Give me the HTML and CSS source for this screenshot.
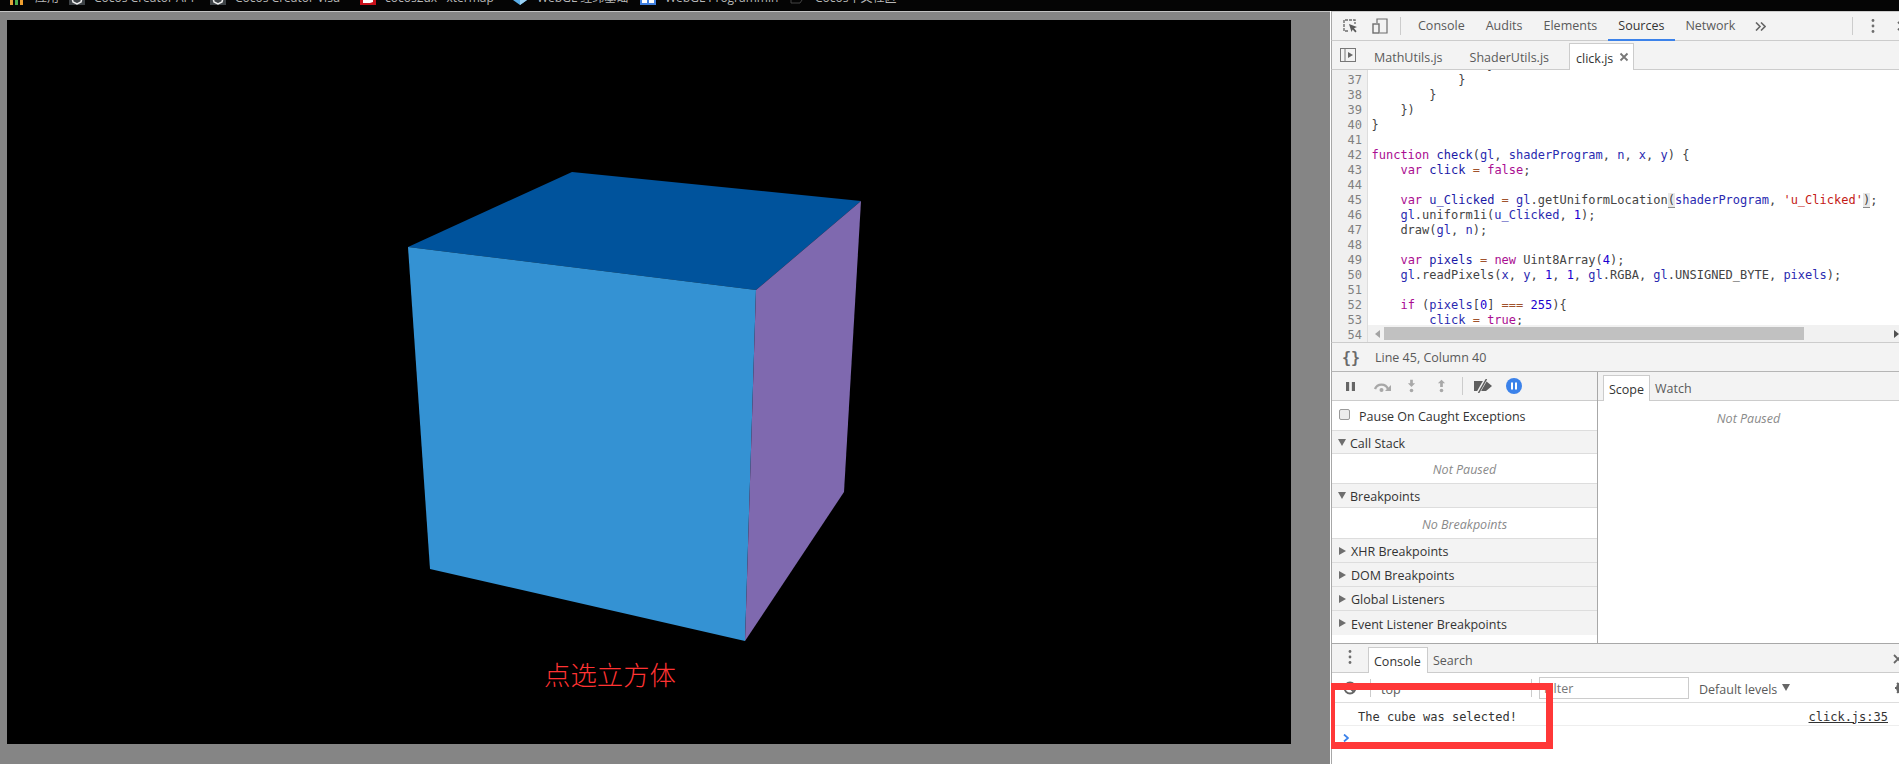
FILE: index.html
```html
<!DOCTYPE html>
<html lang="zh">
<head>
<meta charset="utf-8">
<title>点选立方体</title>
<link rel="stylesheet" href="styles.css">
</head>
<body>
<header class="browser-bar">
  <div class="bookmarks">
    <div class="bm"><svg class="bm-icon" viewBox="0 0 16 16"><rect x="0" y="11" width="3" height="5" fill="#e8a33b"/><rect x="5" y="11" width="3" height="5" fill="#4caf50"/><rect x="10" y="11" width="3" height="5" fill="#f0a030"/></svg><span>应用</span></div>
    <div class="bm"><svg class="bm-icon" viewBox="0 0 16 16"><rect width="16" height="16" fill="#3d4246"/><path d="M3 9l1 4 4 2 4-2 1-4" fill="none" stroke="#eee" stroke-width="1.5"/></svg><span>Cocos Creator API</span></div>
    <div class="bm"><svg class="bm-icon" viewBox="0 0 16 16"><rect width="16" height="16" fill="#3d4246"/><path d="M3 9l1 4 4 2 4-2 1-4" fill="none" stroke="#eee" stroke-width="1.5"/></svg><span>Cocos Creator Visu</span></div>
    <div class="bm"><svg class="bm-icon" viewBox="0 0 16 16"><rect width="16" height="16" fill="#c8101a"/><path d="M3 10h10v3l-3 1H3z" fill="#fff"/></svg><span>cocos2dx · xtermap</span></div>
    <div class="bm"><svg class="bm-icon" viewBox="0 0 16 16"><path d="M1 11h14l-7 5z" fill="#5aaee8"/><path d="M8 11h7l-7 5z" fill="#9ad2f5"/></svg><span>WebGL 经纬基础</span></div>
    <div class="bm"><svg class="bm-icon" viewBox="0 0 16 16"><rect width="16" height="16" fill="#3f7fe0"/><rect x="2" y="9" width="5" height="5" fill="#fff"/><rect x="9" y="9" width="5" height="5" fill="#fff"/></svg><span>WebGL Programmin</span></div>
    <div class="bm"><svg class="bm-icon" viewBox="0 0 16 16"><path d="M1 9v5h9l2-3V9" fill="none" stroke="#444" stroke-width="1"/></svg><span>Cocos中文社区</span></div>
  </div>
</header>

<main class="workspace">
  <section class="viewport">
    <div class="canvas">
      <svg class="cube" viewBox="0 0 1284 724" aria-label="cube">
        <polygon points="565,152 854,181 749,270 401,227" fill="#00539c"/>
        <polygon points="401,227 749,270 738,621 423,549" fill="#3492d3"/>
        <polygon points="749,270 854,181 837,472 738,621" fill="#7f69af"/>
      </svg>
      <p class="caption">点选立方体</p>
    </div>
  </section>

  <aside class="devtools">
    <nav class="main-tabs">
      <svg class="ic ic-inspect" viewBox="0 0 16 16"><path d="M6 13H2V2h11v4" fill="none" stroke="#6e6e6e" stroke-width="1.4" stroke-dasharray="3 1"/><path d="M7 6l8 3-3 1.3 2.6 3-1.3 1.2-2.6-3L9.500 14z" fill="#5a5a5a"/></svg>
      <svg class="ic ic-device" viewBox="0 0 16 16"><path d="M5 5V1h10v14H8" fill="none" stroke="#6e6e6e" stroke-width="1.2"/><rect x="1" y="6" width="6" height="9" fill="none" stroke="#6e6e6e" stroke-width="1.4"/></svg>
      <i class="sep sep-a"></i>
      <span class="tab">Console</span>
      <span class="tab">Audits</span>
      <span class="tab">Elements</span>
      <span class="tab active">Sources</span>
      <span class="tab">Network</span>
      <svg class="more" viewBox="0 0 11 9"><path d="M1 .5L5 4.500 1 8.500M6 .5l4 4-4 4" fill="none" stroke="#666" stroke-width="1.600"/></svg>
      <i class="sep sep-b"></i>
      <svg class="kebab" viewBox="0 0 4 16"><circle cx="2" cy="2.500" r="1.400"/><circle cx="2" cy="8" r="1.400"/><circle cx="2" cy="13.500" r="1.400"/></svg>
      <svg class="close-x" viewBox="0 0 10 10"><path d="M1 1l8 8M9 1L1 9" stroke="#666" stroke-width="1.800"/></svg>
    </nav>

    <div class="file-tabs">
      <svg class="ic ic-toggle" viewBox="0 0 16 14"><rect x=".5" y=".5" width="15" height="13" fill="none" stroke="#777"/><path d="M5 1v12" stroke="#777"/><path d="M8 4l5 3-5 3z" fill="#666"/></svg>
      <span class="file">MathUtils.js</span>
      <span class="file">ShaderUtils.js</span>
      <span class="file open">click.js<svg class="file-x" viewBox="0 0 10 10"><path d="M1.500 1.500l7 7M8.500 1.500l-7 7" stroke="#777" stroke-width="1.800"/></svg></span>
    </div>

    <div class="code">
      <div class="lines">
        <div class="ln"><b>36</b><code>                }</code></div>
        <div class="ln"><b>37</b><code>            }</code></div>
        <div class="ln"><b>38</b><code>        }</code></div>
        <div class="ln"><b>39</b><code>    })</code></div>
        <div class="ln"><b>40</b><code>}</code></div>
        <div class="ln"><b>41</b><code></code></div>
        <div class="ln"><b>42</b><code><em class="k">function</em> <em class="d">check</em>(<em class="v">gl</em>, <em class="v">shaderProgram</em>, <em class="v">n</em>, <em class="v">x</em>, <em class="v">y</em>) {</code></div>
        <div class="ln"><b>43</b><code>    <em class="k">var</em> <em class="d">click</em> <em class="o">=</em> <em class="k">false</em>;</code></div>
        <div class="ln"><b>44</b><code></code></div>
        <div class="ln"><b>45</b><code>    <em class="k">var</em> <em class="d">u_Clicked</em> <em class="o">=</em> <em class="v">gl</em>.getUniformLocation<em class="match">(</em><em class="v">shaderProgram</em>, <em class="s">'u_Clicked'</em><em class="match">)</em>;</code></div>
        <div class="ln"><b>46</b><code>    <em class="v">gl</em>.uniform1i(<em class="v">u_Clicked</em>, <em class="m">1</em>);</code></div>
        <div class="ln"><b>47</b><code>    draw(<em class="v">gl</em>, <em class="v">n</em>);</code></div>
        <div class="ln"><b>48</b><code></code></div>
        <div class="ln"><b>49</b><code>    <em class="k">var</em> <em class="d">pixels</em> <em class="o">=</em> <em class="k">new</em> Uint8Array(<em class="m">4</em>);</code></div>
        <div class="ln"><b>50</b><code>    <em class="v">gl</em>.readPixels(<em class="v">x</em>, <em class="v">y</em>, <em class="m">1</em>, <em class="m">1</em>, <em class="v">gl</em>.RGBA, <em class="v">gl</em>.UNSIGNED_BYTE, <em class="v">pixels</em>);</code></div>
        <div class="ln"><b>51</b><code></code></div>
        <div class="ln"><b>52</b><code>    <em class="k">if</em> (<em class="v">pixels</em>[<em class="m">0</em>] <em class="o">===</em> <em class="m">255</em>){</code></div>
        <div class="ln"><b>53</b><code>        <em class="v">click</em> <em class="o">=</em> <em class="k">true</em>;</code></div>
        <div class="ln"><b>54</b><code></code></div>
      </div>
      <div class="hscroll">
        <i class="arrow-l"></i>
        <i class="thumb"></i>
        <i class="arrow-r"></i>
      </div>
    </div>

    <div class="status"><span class="braces">{}</span><span>Line 45, Column 40</span></div>

    <div class="debugger">
      <div class="dbg-left">
        <div class="dbg-tools">
          <svg class="t t-pause" viewBox="0 0 12 10"><path d="M1 0h3.500v10H1zM7.500 0H11v10H7.500z" fill="#666"/></svg>
          <svg class="t t-over" viewBox="0 0 18 11"><path d="M2 8a7 7 0 0 1 13 0" fill="none" stroke="#a8a8a8" stroke-width="2.400"/><path d="M18 4v6h-6z" fill="#a8a8a8"/><circle cx="8.500" cy="9" r="2" fill="#a8a8a8"/></svg>
          <svg class="t t-into" viewBox="0 0 10 14"><path d="M3.500 0h3v4H9L5 8 1 4h2.500z" fill="#a8a8a8"/><circle cx="5" cy="12" r="2" fill="#a8a8a8"/></svg>
          <svg class="t t-out" viewBox="0 0 10 14"><path d="M3.500 8h3V4H9L5 0 1 4h2.500z" fill="#a8a8a8"/><circle cx="5" cy="12" r="2" fill="#a8a8a8"/></svg>
          <i class="t-sep"></i>
          <svg class="t t-deact" viewBox="0 0 20 14"><path d="M1 2h12l6 5-6 5H1z" fill="#5f5f5f"/><path d="M13 0L5 14" stroke="#f3f3f3" stroke-width="3.500"/><path d="M13.500 0L5.500 14" stroke="#5f5f5f" stroke-width="1.500"/></svg>
          <svg class="t t-exc" viewBox="0 0 16 16"><circle cx="8" cy="8" r="8" fill="#3b82ea"/><path d="M5 4.500h2v7H5zM9 4.500h2v7H9z" fill="#fff"/></svg>
        </div>
        <label class="pause-row"><i class="check"></i><span class="row-label">Pause On Caught Exceptions</span></label>
        <div class="sec short"><i class="tri down"></i>Call Stack</div>
        <div class="empty e1">Not Paused</div>
        <div class="sec"><i class="tri down"></i>Breakpoints</div>
        <div class="empty e1 tall">No Breakpoints</div>
        <div class="sec"><i class="tri"></i>XHR Breakpoints</div>
        <div class="sec"><i class="tri"></i>DOM Breakpoints</div>
        <div class="sec"><i class="tri"></i>Global Listeners</div>
        <div class="sec last"><i class="tri"></i>Event Listener Breakpoints</div>
      </div>
      <div class="dbg-right">
        <div class="scope-tabs"><span class="scope on">Scope</span><span class="scope">Watch</span></div>
        <div class="empty e2">Not Paused</div>
      </div>
    </div>

    <div class="drawer">
      <div class="drawer-tabs">
        <svg class="kebab k2" viewBox="0 0 4 16"><circle cx="2" cy="2.500" r="1.400"/><circle cx="2" cy="8" r="1.400"/><circle cx="2" cy="13.500" r="1.400"/></svg>
        <span class="dtab on">Console</span>
        <span class="dtab">Search</span>
        <svg class="close-x x2" viewBox="0 0 10 10"><path d="M1 1l8 8M9 1L1 9" stroke="#666" stroke-width="1.800"/></svg>
      </div>
      <div class="console-bar">
        <svg class="clear" viewBox="0 0 14 14"><circle cx="7" cy="7" r="5.500" fill="none" stroke="#666" stroke-width="2"/><path d="M3 3l8 8" stroke="#666" stroke-width="2"/></svg>
        <i class="c-sep s1"></i>
        <span class="ctx">top</span>
        <i class="c-sep s2"></i>
        <span class="filter">Filter</span>
        <span class="levels">Default levels</span>
        <i class="lv-tri"></i>
        <svg class="gear" viewBox="0 0 14 14"><circle cx="7" cy="7" r="4.500" fill="none" stroke="#666" stroke-width="3"/><path d="M7 0v14M0 7h14M2 2l10 10M12 2L2 12" stroke="#666" stroke-width="2" stroke-dasharray="2 10"/></svg>
      </div>
      <div class="msg"><code>The cube was selected!</code><a class="src-link">click.js:35</a></div>
      <svg class="prompt" viewBox="0 0 6 8"><path d="M1 .5L5 4 1 7.500" fill="none" stroke="#3b82ea" stroke-width="1.800"/></svg>
    </div>

    <div class="highlight"></div>
  </aside>
</main>
</body>
</html>
```

FILE: styles.css
```css
* { box-sizing: border-box; }
html, body { margin: 0; height: 764px; overflow: hidden; }
body { display: flex; flex-direction: column; background: #858585; font: 12.5px "Open Sans", "Noto Sans CJK SC", sans-serif; color: #333; }
i, em { font-style: normal; display: inline-block; }

/* browser chrome remnant */
.browser-bar { height: 11px; flex: none; background: #050505; overflow: hidden; }
.bookmarks { display: grid; grid-template-columns: 59px 141px 150px 152px 128px 150px 1fr; height: 16px; margin: -11px 0 0 10px; color: #b8b8b8; font-size: 12px; }
.bm { display: flex; align-items: center; gap: 9px; overflow: hidden; white-space: nowrap; }
.bm-icon { width: 16px; height: 16px; flex: none; }

.workspace { flex: 1; display: flex; min-height: 0; }

/* page */
.viewport { width: 1330px; flex: none; border-top: 1px solid #c4c4c4; padding: 8px 39px 20px 7px; background: #858585; }
.canvas { position: relative; height: 724px; background: #000; }
.cube { display: block; width: 1284px; height: 724px; }
.caption { position: absolute; left: 537px; top: 636px; margin: 0; font: 26.4px "Noto Sans CJK SC", sans-serif; font-weight: 300; line-height: 36px; color: #ff3333; white-space: nowrap; }

/* devtools */
.devtools { position: relative; flex: 1; min-width: 0; display: flex; flex-direction: column; border-left: 1px solid #fff; background: #fff; overflow: hidden; }
.devtools > * { border-left: 1px solid #a8a8a8; }
.main-tabs { display: flex; align-items: center; flex: none; height: 30px; background: #f3f3f3; border-top: 1px solid #ccc; border-bottom: 1px solid #ccc; color: #5a5a5a; white-space: nowrap; }
.ic { flex: none; }
.ic-inspect { width: 16px; height: 16px; margin-left: 10px; }
.ic-device { width: 16px; height: 18px; margin-left: 14px; }
.sep { width: 1px; height: 18px; background: #ccc; flex: none; }
.sep-a { margin: 0 6.500px 0 12px; }
.tab { height: 28px; line-height: 27px; padding: 0 10.500px; }
.tab.active { color: #333; border-bottom: 2px solid #3b82ea; height: 29px; }
.more { flex: none; width: 11px; height: 9px; margin-left: 9px; }
.sep-b { margin-left: 86px; }
.kebab { width: 4px; height: 16px; fill: #6e6e6e; margin-left: 18px; flex: none; }
.close-x { width: 10px; height: 10px; flex: none; margin-left: 22px; }

.file-tabs { display: flex; align-items: flex-end; flex: none; height: 29px; background: #f3f3f3; border-bottom: 1px solid #ccc; color: #5a5a5a; white-space: nowrap; }
.ic-toggle { width: 16px; height: 14px; margin: 0 18px 7px 8px; }
.file { height: 26px; line-height: 29px; }
.file + .file { margin-left: 27px; }
.file.open { display: flex; align-items: center; margin: 0 0 -1px 20px; height: 27px; width: 65px; padding: 2px 0 0 6px; gap: 6px; line-height: 25px; color: #333; background: #fff; border: 1px solid #ccc; border-bottom: 0; }
.file-x { width: 10px; height: 10px; margin-top: -2px; }

.code { position: relative; flex: none; height: 272px; overflow: hidden; background: #fff; }
.lines { margin-top: -12px; }
.ln { display: flex; height: 15px; font: 12px/15px "DejaVu Sans Mono", monospace; }
.ln b { flex: none; width: 36px; padding-right: 5px; font-weight: 400; text-align: right; color: #808080; background: #f0f0f0; border-right: 1px solid #ddd; }
.ln code { font: inherit; padding-left: 3.500px; white-space: pre; color: #444; }
.k { color: #aa0d91; }
.d { color: #1a1aa6; }
.v { color: #2a2ab0; }
.m { color: #1c00cf; }
.s { color: #c41a16; }
.o { color: #a0522d; }
.match { background: #e8e8e8; box-shadow: inset 0 -1px 0 #888; }

.hscroll { position: absolute; left: 36px; right: 0; bottom: 0; height: 17px; display: flex; align-items: center; background: #f1f1f1; }
.arrow-l { width: 0; height: 0; margin-left: 7px; border: 4px solid transparent; border-right: 5px solid #a3a3a3; border-left: 0; }
.thumb { width: 420px; height: 13px; margin-left: 4px; background: #c1c1c1; }
.arrow-r { width: 0; height: 0; margin-left: auto; border: 4px solid transparent; border-left: 5px solid #505050; border-right: 0; }

.status { display: flex; align-items: center; flex: none; height: 30px; padding-top: 1px; background: #f3f3f3; border-top: 1px solid #ccc; border-bottom: 1px solid #b5b5b5; color: #5a5a5a; }
.braces { width: 43px; padding-left: 10px; font: 700 15px "DejaVu Sans Mono", monospace; color: #6a6a6a; }

.debugger { display: flex; flex: none; height: 272px; border-bottom: 1px solid #a8a8a8; }
.dbg-left { width: 266px; flex: none; background: #fff; border-right: 1px solid #a8a8a8; }
.dbg-tools { display: flex; align-items: center; height: 29px; background: #f3f3f3; border-bottom: 1px solid #ccc; }
.t { flex: none; }
.t-pause { width: 11px; height: 9px; margin-left: 13px; }
.t-over { width: 18px; height: 11px; margin-left: 17px; }
.t-into { width: 9px; height: 14px; margin-left: 16px; }
.t-out { width: 9px; height: 14px; margin-left: 21px; }
.t-sep { width: 1px; height: 18px; background: #ccc; margin-left: 16px; }
.t-deact { width: 20px; height: 14px; margin-left: 10px; }
.t-exc { width: 16px; height: 16px; margin-left: 13px; }
.pause-row { display: flex; align-items: center; height: 30px; padding-left: 7px; border-bottom: 1px solid #ddd; white-space: nowrap; color: #333; }
.row-label { padding-top: 1px; }
.check { width: 11px; height: 11px; margin: -3px 9px 0 0; background: #ededed; border: 1px solid #9a9a9a; border-radius: 2px; }
.sec { display: flex; align-items: center; height: 24px; padding-top: 2px; background: #f3f3f3; border-bottom: 1px solid #ddd; color: #333; white-space: nowrap; }
.sec.short { height: 23px; }
.sec.last { border-bottom: 0; }
.tri { width: 0; height: 0; margin: -2px 5px 0 7px; border: 4px solid transparent; border-left: 7px solid #6e6e6e; border-right: 0; }
.tri.down { margin: -2px 4px 0 6px; border: 4px solid transparent; border-top: 7px solid #6e6e6e; border-bottom: 0; }
.empty { text-align: center; font-style: italic; color: #8a8a8a; }
.e1 { height: 30px; line-height: 31px; border-bottom: 1px solid #ddd; }
.e1.tall { height: 31px; line-height: 33px; }
.e2 { height: 28px; line-height: 35px; }
.dbg-right { flex: 1; min-width: 0; }
.scope-tabs { display: flex; align-items: flex-end; height: 29px; padding-left: 5px; background: #f3f3f3; border-bottom: 1px solid #ccc; color: #5a5a5a; }
.scope { height: 25px; line-height: 27px; padding: 0 5px; }
.scope.on { color: #333; background: #fff; border: 1px solid #ccc; border-bottom: 0; margin-bottom: -1px; height: 26px; }

.drawer { position: relative; flex: 1; min-height: 0; background: #fff; }
.drawer-tabs { display: flex; align-items: flex-end; height: 29px; background: #f3f3f3; border-bottom: 1px solid #ccc; color: #5a5a5a; }
.k2 { margin: 0 16px 7px 16px; }
.dtab { height: 25px; line-height: 27px; padding: 0 5px; }
.dtab.on { height: 26px; margin-bottom: -1px; width: 60px; color: #333; background: #fff; border: 1px solid #ccc; border-bottom: 0; }
.x2 { margin: 0 0 8px auto; transform: translateX(4px); }
.console-bar { display: flex; align-items: center; height: 30px; border-bottom: 1px solid #ddd; color: #5a5a5a; }
.clear { width: 14px; height: 14px; margin-left: 11px; flex: none; }
.c-sep { width: 1px; height: 18px; background: #ccc; flex: none; }
.s1 { margin-left: 13px; }
.ctx { width: 160px; flex: none; padding: 3px 0 0 10px; }
.filter { width: 150px; height: 22px; line-height: 22px; margin-left: 7px; padding-left: 4px; border: 1px solid #ccc; color: #777; flex: none; }
.levels { margin-left: 10px; padding-top: 3px; flex: none; white-space: nowrap; }
.lv-tri { margin-left: 5px; width: 0; height: 0; flex: none; border: 4px solid transparent; border-top: 7px solid #666; border-bottom: 0; }
.gear { width: 14px; height: 14px; margin-left: 105px; flex: none; }
.msg { display: flex; align-items: center; justify-content: space-between; height: 23px; padding: 5px 11px 0 26px; border-bottom: 1px solid #eee; font: 12px "DejaVu Sans Mono", monospace; color: #333; }
.msg code { font: inherit; }
.src-link { color: #333; text-decoration: underline; }
.prompt { display: block; width: 6px; height: 8px; margin: 8px 0 0 11px; }

.highlight { position: absolute; left: -3px; top: 672px; width: 225px; height: 66px; border: 7px solid #ff3838; }
```
